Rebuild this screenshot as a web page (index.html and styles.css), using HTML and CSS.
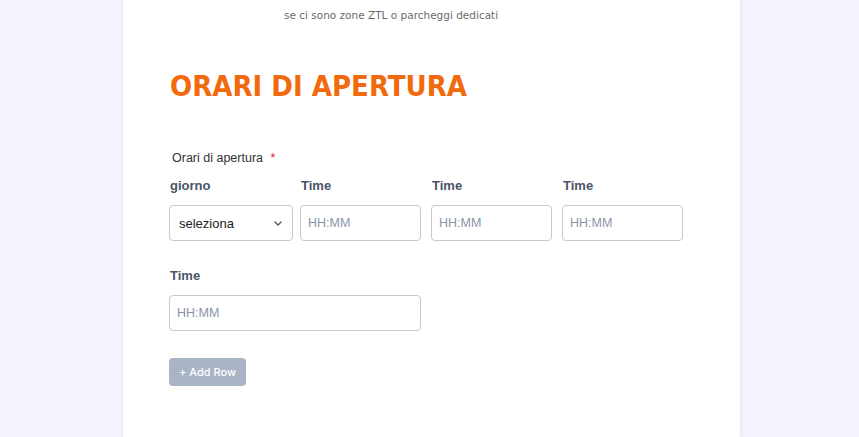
FILE: index.html
```html
<!DOCTYPE html>
<html lang="it">
<head>
  <meta charset="UTF-8" />
  <title>Orari di apertura</title>
  <link rel="stylesheet" href="styles.css">
</head>
<body>
  <div class="card">
    <p class="hint">se ci sono zone ZTL o parcheggi dedicati</p>

    <h2 class="section-title">ORARI DI APERTURA</h2>

    <div class="field">
      <label class="field-label">Orari di apertura <span class="req">*</span></label>

      <div class="row">
        <div class="cell">
          <div class="col-label">giorno</div>
          <div class="select-box">
            <span>seleziona</span>
            <svg width="8" height="5" viewBox="0 0 8 5"><path d="M1 1l3 3 3-3" fill="none" stroke="#555" stroke-width="1.4" stroke-linecap="round" stroke-linejoin="round"/></svg>
          </div>
        </div>
        <div class="cell">
          <div class="col-label">Time</div>
          <input class="time" type="text" placeholder="HH:MM">
        </div>
        <div class="cell">
          <div class="col-label">Time</div>
          <input class="time" type="text" placeholder="HH:MM">
        </div>
        <div class="cell">
          <div class="col-label">Time</div>
          <input class="time" type="text" placeholder="HH:MM">
        </div>
      </div>

      <div class="row second">
        <div class="cell wide">
          <div class="col-label">Time</div>
          <input class="time" type="text" placeholder="HH:MM">
        </div>
      </div>

      <button class="add-row">+ Add Row</button>
    </div>
  </div>
</body>
</html>
```

FILE: styles.css
```css
body {
  margin: 0;
  background: #f3f3fe;
  font-family: 'Liberation Sans', Arial, sans-serif;
  height: 437px;
  overflow: hidden;
}

.card {
  background: #fff;
  width: 617px;
  margin-left: 123px;
  height: 437px;
  box-shadow: 0 0 3px rgba(80, 80, 140, 0.15);
  padding: 0 0 0 46px;
  box-sizing: border-box;
}

.hint {
  margin: 0;
  padding: 9px 0 0 115px;
  font-family: 'DejaVu Sans', sans-serif;
  font-size: 10.5px;
  color: #6b6b6b;
}

.section-title {
  margin: 48px 0 0 1px;
  font-family: 'DejaVu Sans Condensed', 'DejaVu Sans', sans-serif;
  font-stretch: condensed;
  font-weight: bold;
  font-size: 29px;
  color: #f26a0e;
}

.field {
  margin-top: 48px;
}

.field-label {
  display: block;
  margin-left: 3px;
  font-size: 12.5px;
  color: #333;
}

.req {
  color: #e02424;
  margin-left: 4px;
}

.row {
  display: flex;
  margin-top: 13px;
}

.row.second {
  margin-top: 27px;
}

.cell {
  width: 124px;
  margin-right: 7px;
}

.cell.wide {
  width: 252px;
}

.col-label {
  font-size: 13px;
  font-weight: bold;
  color: #4a5568;
  margin: 0 0 12px 1px;
}

.select-box {
  height: 36px;
  box-sizing: border-box;
  border: 1px solid #c6c8cc;
  border-radius: 4px;
  display: flex;
  align-items: center;
  justify-content: space-between;
  padding: 0 10px 0 9px;
  font-size: 13px;
  color: #222;
}

.time {
  width: 121px;
  height: 36px;
  box-sizing: border-box;
  border: 1px solid #c6c8cc;
  border-radius: 4px;
  padding: 0 7px;
  font-family: 'Liberation Sans', Arial, sans-serif;
  font-size: 12.5px;
  margin: 0;
}

.wide .time {
  width: 252px;
}

.time::placeholder {
  color: #8a94a6;
}

.add-row {
  margin-top: 27px;
  width: 77px;
  height: 28px;
  border: none;
  border-radius: 4px;
  background: #a9b4c6;
  color: #fff;
  font-family: Inter, 'Liberation Sans', sans-serif;
  font-size: 11px;
  font-weight: 500;
  padding: 0;
}
```
